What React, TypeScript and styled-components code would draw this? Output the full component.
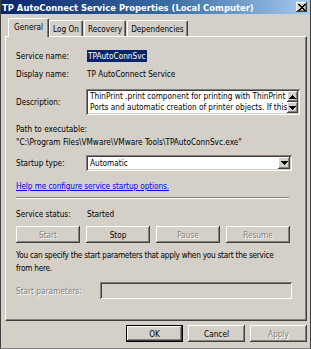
import React from "react";
import styled, { createGlobalStyle, css } from "styled-components";

const Global = createGlobalStyle`
  html, body { margin: 0; padding: 0; background: #d4d0c8; }
  body { font-family: "DejaVu Sans Condensed", "Liberation Sans", Arial, sans-serif; font-size: 8.2px; color: #000; }
  * { box-sizing: border-box; }
`;

const Window = styled.div`
  width: 311px;
  height: 349px;
  background: #d4d0c8;
  border-left: 1px solid #404040;
  border-right: 1px solid #404040;
  border-bottom: 1px solid #808080;
  display: flex;
  flex-direction: column;
  overflow: hidden;
`;

const TitleBar = styled.div`
  height: 14px;
  flex: none;
  display: flex;
  align-items: center;
  justify-content: space-between;
  padding: 0 3px 0 1px;
  background: linear-gradient(to right, #0a246a 0%, #3a6ea5 55%, #a6caf0 100%);
`;

const Title = styled.span`
  color: #fff;
  font-weight: bold;
  font-size: 9.4px;
  white-space: nowrap;
`;

const CloseBtn = styled.div`
  width: 11px;
  height: 10px;
  background: #d4d0c8;
  box-shadow: inset -1px -1px #404040, inset 1px 1px #fff, inset -2px -2px #808080;
  display: flex;
  align-items: center;
  justify-content: center;
`;

const Body = styled.div`
  flex: 1;
  display: flex;
  flex-direction: column;
  padding: 4px 3px 0 4px;
`;

const TabStrip = styled.div`
  display: flex;
  align-items: flex-end;
  height: 18px;
  padding-left: 3px;
  position: relative;
  z-index: 1;
`;

const Tab = styled.div<{ $active?: boolean }>`
  height: 16px;
  padding: 0 3px;
  margin-right: 1px;
  display: flex;
  align-items: center;
  background: #d4d0c8;
  border-top: 1px solid #fff;
  border-left: 1px solid #fff;
  border-right: 1px solid #404040;
  box-shadow: inset -1px 0 #808080;
  border-radius: 2px 2px 0 0;
  white-space: nowrap;
  ${(p) =>
    p.$active &&
    css`
      margin-bottom: -1px;
      margin-right: 0;
      height: 19px;
      padding: 0 5px 2px;
    `}
`;

const Panel = styled.div`
  width: 302px;
  height: 285px;
  border-top: 1px solid #fff;
  border-left: 1px solid #fff;
  border-right: 1px solid #404040;
  border-bottom: 1px solid #404040;
  box-shadow: inset -1px -1px #808080;
  padding: 13px 14px 0 10px;
  display: flex;
  flex-direction: column;
`;

const Row = styled.div<{ $h: number; $mt?: number }>`
  display: grid;
  grid-template-columns: 70px 1fr;
  align-items: center;
  height: ${(p) => p.$h}px;
  margin-top: ${(p) => p.$mt || 0}px;
`;

const Label = styled.div<{ $disabled?: boolean }>`
  white-space: nowrap;
  ${(p) =>
    p.$disabled &&
    css`
      color: #808080;
      text-shadow: 1px 1px #fff;
    `}
`;

const Value = styled.div`
  white-space: nowrap;
  padding-left: 1px;
`;

const Selected = styled.span`
  background: #0a246a;
  color: #fff;
  padding: 1px 1px;
  outline: 1px dotted #d4d0c8;
`;

const Line = styled.div<{ $mt?: number; $tight?: boolean }>`
  margin-top: ${(p) => p.$mt || 0}px;
  white-space: nowrap;
  line-height: 12px;
  letter-spacing: ${(p) => (p.$tight ? "-0.25px" : "normal")};
`;

const sunken = css`
  box-shadow: inset 1px 1px #808080, inset -1px -1px #fff, inset 2px 2px #404040,
    inset -2px -2px #d4d0c8;
`;

const TextArea = styled.div`
  ${sunken};
  background: #fff;
  height: 26px;
  display: flex;
  padding: 2px 2px 2px 4px;
  line-height: 11px;
`;

const TextAreaText = styled.div`
  flex: 1;
  overflow: hidden;
  white-space: nowrap;
`;

const ScrollCol = styled.div`
  width: 11px;
  display: flex;
  flex-direction: column;
  justify-content: space-between;
`;

const raised = css`
  background: #d4d0c8;
  box-shadow: inset -1px -1px #404040, inset 1px 1px #fff, inset -2px -2px #808080,
    inset 2px 2px #d4d0c8;
`;

const ArrowBtn = styled.div<{ $h: number }>`
  ${raised};
  height: ${(p) => p.$h}px;
  display: flex;
  align-items: center;
  justify-content: center;
`;

const Combo = styled.div`
  ${sunken};
  background: #fff;
  height: 16px;
  display: flex;
  align-items: center;
  padding: 2px 2px 2px 4px;
`;

const ComboText = styled.div`
  flex: 1;
`;

const ComboBtn = styled.div`
  ${raised};
  width: 12px;
  height: 12px;
  display: flex;
  align-items: center;
  justify-content: center;
`;

const Link = styled.a`
  color: #0000ff;
  text-decoration: underline;
  white-space: nowrap;
  letter-spacing: -0.1px;
`;

const Separator = styled.div<{ $mt?: number }>`
  margin-top: ${(p) => p.$mt || 0}px;
  height: 2px;
  border-top: 1px solid #808080;
  border-bottom: 1px solid #fff;
  margin-right: 3px;
`;

const ButtonRow = styled.div<{ $mt?: number }>`
  display: flex;
  gap: 6px;
  margin-top: ${(p) => p.$mt || 0}px;
`;

const Button = styled.div<{ $disabled?: boolean; $w?: number; $default?: boolean }>`
  ${raised};
  width: ${(p) => p.$w || 64}px;
  height: 17px;
  display: flex;
  align-items: center;
  justify-content: center;
  white-space: nowrap;
  ${(p) =>
    p.$disabled &&
    css`
      color: #808080;
      text-shadow: 1px 1px #fff;
    `}
  ${(p) =>
    p.$default &&
    css`
      box-shadow: inset 0 0 0 1px #000, inset -2px -2px #404040, inset 2px 2px #fff,
        inset -3px -3px #808080;
    `}
`;

const ParamRow = styled.div<{ $mt?: number }>`
  display: grid;
  grid-template-columns: 84px 1fr;
  align-items: center;
  height: 17px;
  margin-top: ${(p) => p.$mt || 0}px;
`;

const DisabledBox = styled.div`
  ${sunken};
  height: 17px;
  background: #d4d0c8;
`;

const Footer = styled.div`
  display: flex;
  justify-content: flex-end;
  gap: 5px;
  margin-top: 4px;
`;

const Up = () => (
  <svg width="7" height="4" viewBox="0 0 7 4">
    <path d="M3 0h1v1h1v1h1v1h1v1H0V3h1V2h1V1h1z" fill="#000" />
  </svg>
);
const Down = () => (
  <svg width="7" height="4" viewBox="0 0 7 4">
    <path d="M0 0h7v1H6v1H5v1H4v1H3V3H2V2H1V1H0z" fill="#000" />
  </svg>
);
const X = () => (
  <svg width="8" height="7" viewBox="0 0 8 7">
    <path
      d="M0 0h2v1h1v1h2V1h1V0h2v1H7v1H6v1H5v1h1v1h1v1h1v1H6V6H5V5H3v1H2v1H0V6h1V5h1V4h1V3H2V2H1V1H0z"
      fill="#000"
    />
  </svg>
);

export default function App() {
  return (
    <>
      <Global />
      <Window>
        <TitleBar>
          <Title>TP AutoConnect Service Properties (Local Computer)</Title>
          <CloseBtn>
            <X />
          </CloseBtn>
        </TitleBar>
        <Body>
          <TabStrip>
            <Tab $active>General</Tab>
            <Tab>Log On</Tab>
            <Tab>Recovery</Tab>
            <Tab>Dependencies</Tab>
          </TabStrip>
          <Panel>
            <Row $h={12}>
              <Label>Service name:</Label>
              <Value>
                <Selected>TPAutoConnSvc</Selected>
              </Value>
            </Row>
            <Row $h={12} $mt={6}>
              <Label>Display name:</Label>
              <Value>TP AutoConnect Service</Value>
            </Row>
            <Row $h={26} $mt={9}>
              <Label>Description:</Label>
              <TextArea>
                <TextAreaText>
                  ThinPrint .print component for printing with ThinPrint
                  <br />
                  Ports and automatic creation of printer objects. If this
                </TextAreaText>
                <ScrollCol>
                  <ArrowBtn $h={11}>
                    <Up />
                  </ArrowBtn>
                  <ArrowBtn $h={11}>
                    <Down />
                  </ArrowBtn>
                </ScrollCol>
              </TextArea>
            </Row>
            <Line $mt={8}>Path to executable:</Line>
            <Line $mt={1}>"C:\Program Files\VMware\VMware Tools\TPAutoConnSvc.exe"</Line>
            <Row $h={16} $mt={7}>
              <Label>Startup type:</Label>
              <Combo>
                <ComboText>Automatic</ComboText>
                <ComboBtn>
                  <Down />
                </ComboBtn>
              </Combo>
            </Row>
            <Line $mt={9}>
              <Link>Help me configure service startup options.</Link>
            </Line>
            <Separator $mt={5} />
            <Row $h={12} $mt={9}>
              <Label>Service status:</Label>
              <Value>Started</Value>
            </Row>
            <ButtonRow $mt={6}>
              <Button $disabled>Start</Button>
              <Button>Stop</Button>
              <Button $disabled>Pause</Button>
              <Button $disabled>Resume</Button>
            </ButtonRow>
            <Line $mt={6} $tight>
              You can specify the start parameters that apply when you start the service
            </Line>
            <Line $mt={1} $tight>
              from here.
            </Line>
            <ParamRow $mt={8}>
              <Label $disabled>Start parameters:</Label>
              <DisabledBox />
            </ParamRow>
          </Panel>
          <Footer>
            <Button $w={57} $default>
              OK
            </Button>
            <Button $w={57}>Cancel</Button>
            <Button $w={57} $disabled>
              Apply
            </Button>
          </Footer>
        </Body>
      </Window>
    </>
  );
}
